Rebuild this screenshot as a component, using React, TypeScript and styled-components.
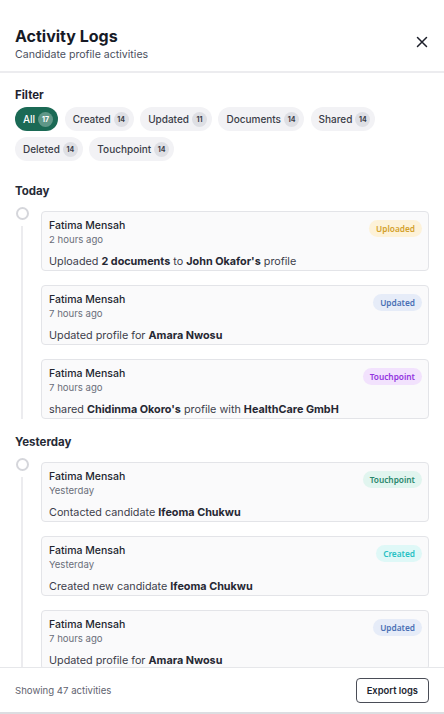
import React from "react";
import styled, { createGlobalStyle } from "styled-components";

const Global = createGlobalStyle`
  html, body { margin: 0; padding: 0; background: #ffffff; }
  * { box-sizing: border-box; }
  body { font-family: Inter, "Noto Sans", sans-serif; color: #1f2937; }
`;

const Panel = styled.div`
  width: 444px;
  height: 714px;
  display: flex;
  flex-direction: column;
  background: #fff;
  border-bottom: 2px solid #dcdde1;
  overflow: hidden;
`;

const Header = styled.header`
  display: flex;
  align-items: center;
  justify-content: space-between;
  height: 73px;
  padding: 16px 16px 0 15px;
  border-bottom: 2px solid #ececef;
  flex-shrink: 0;
`;

const TitleBlock = styled.div`
  display: flex;
  flex-direction: column;
  gap: 1px;
`;

const Title = styled.h1`
  margin: 0;
  font-size: 16px;
  line-height: 20px;
  font-weight: 700;
  color: #161a26;
`;

const Subtitle = styled.p`
  margin: 0;
  font-size: 10.6px;
  line-height: 15px;
  color: #4b5060;
`;

const CloseButton = styled.button`
  border: 0;
  background: none;
  padding: 0;
  width: 12px;
  height: 12px;
  margin-top: -4px;
  display: flex;
  align-items: center;
  justify-content: center;
  color: #1c1f2a;
  cursor: pointer;
`;

const Body = styled.div`
  flex: 1;
  overflow: hidden;
  padding: 15px 15px 0;
`;

const SectionLabel = styled.div`
  font-size: 11.5px;
  line-height: 15px;
  font-weight: 700;
  color: #1f2330;
  margin-bottom: 4px;
`;

const Chips = styled.div`
  display: flex;
  flex-wrap: wrap;
  gap: 6px 6.5px;
`;

const Chip = styled.button<{ $active?: boolean }>`
  display: inline-flex;
  align-items: center;
  gap: 3px;
  height: 24px;
  padding: 0 5px 0 8px;
  border: 0;
  border-radius: 12px;
  font-family: Inter, "Noto Sans", sans-serif;
  font-size: 10px;
  font-weight: 500;
  color: ${(p) => (p.$active ? "#ffffff" : "#3a3d48")};
  background: ${(p) => (p.$active ? "#1b6a55" : "#f2f2f5")};
`;

const Count = styled.span<{ $active?: boolean }>`
  display: inline-flex;
  align-items: center;
  justify-content: center;
  min-width: 15px;
  height: 15px;
  padding: 0 3px;
  border-radius: 8px;
  font-size: 7px;
  font-weight: 700;
  color: ${(p) => (p.$active ? "#ffffff" : "#3a3d48")};
  background: ${(p) => (p.$active ? "rgba(255,255,255,0.3)" : "#dedfe4")};
`;

const Group = styled.section`
  margin-top: 22px;
  & + & { margin-top: 15px; }
`;

const GroupTitle = styled.h2`
  margin: 0 0 8px;
  font-size: 11.5px;
  line-height: 16px;
  font-weight: 700;
  color: #262a36;
`;

const Timeline = styled.div`
  display: grid;
  grid-template-columns: 26px 1fr;
`;

const Rail = styled.div`
  display: flex;
  flex-direction: column;
  align-items: center;
  width: 14px;
`;

const Dot = styled.div`
  width: 13px;
  height: 13px;
  border-radius: 50%;
  border: 2.5px solid #d5d6db;
  background: #fff;
  flex-shrink: 0;
`;

const Line = styled.div`
  flex: 1;
  width: 2px;
  margin-top: 6px;
  background: #ececef;
`;

const Cards = styled.div`
  display: flex;
  flex-direction: column;
  gap: 14px;
  margin-top: 4px;
`;

const Card = styled.article`
  position: relative;
  height: 60px;
  padding: 7px 7px 0;
  border: 1px solid #e3e4e8;
  border-radius: 4px;
  background: #fafafb;
`;

const Name = styled.div`
  font-size: 10.5px;
  line-height: 14px;
  font-weight: 500;
  color: #22252f;
`;

const Time = styled.div`
  font-size: 9.6px;
  line-height: 14px;
  color: #6a6e7a;
`;

const Text = styled.p`
  margin: 8px 0 0;
  font-size: 10.8px;
  line-height: 14px;
  color: #3d404b;
  b { font-weight: 700; color: #262833; }
`;

const Badge = styled.span<{ $bg: string; $fg: string }>`
  position: absolute;
  top: 8px;
  right: 6px;
  height: 17px;
  padding: 0 7px;
  border-radius: 9px;
  display: inline-flex;
  align-items: center;
  font-family: "Noto Sans", Inter, sans-serif;
  font-size: 8.3px;
  font-weight: 600;
  background: ${(p) => p.$bg};
  color: ${(p) => p.$fg};
`;

const Footer = styled.footer`
  flex-shrink: 0;
  height: 45px;
  display: flex;
  align-items: center;
  justify-content: space-between;
  padding: 0 15px;
  border-top: 1px solid #e6e7ea;
`;

const FooterText = styled.span`
  font-size: 9.6px;
  color: #5f6370;
`;

const ExportButton = styled.button`
  height: 25px;
  padding: 0 10px;
  border: 1px solid #4a4d57;
  border-radius: 4px;
  background: #fff;
  font-family: Inter, "Noto Sans", sans-serif;
  font-size: 9.4px;
  font-weight: 600;
  color: #22252f;
`;

const badgeColors: Record<string, { bg: string; fg: string }> = {
  uploaded: { bg: "#fdf2d9", fg: "#d3a12c" },
  updated: { bg: "#e6ecf8", fg: "#4a70b5" },
  touchPurple: { bg: "#f2e2fd", fg: "#9234e0" },
  touchGreen: { bg: "#e1f5ef", fg: "#2a876c" },
  created: { bg: "#dff8f7", fg: "#27c1c4" },
};

type Item = { time: string; badge: string; kind: string; text: React.ReactNode };

const groups: { title: string; items: Item[] }[] = [
  {
    title: "Today",
    items: [
      { time: "2 hours ago", badge: "Uploaded", kind: "uploaded", text: <>Uploaded <b>2 documents</b> to <b>John Okafor's</b> profile</> },
      { time: "7 hours ago", badge: "Updated", kind: "updated", text: <>Updated profile for <b>Amara Nwosu</b></> },
      { time: "7 hours ago", badge: "Touchpoint", kind: "touchPurple", text: <>shared <b>Chidinma Okoro's</b> profile with <b>HealthCare GmbH</b></> },
    ],
  },
  {
    title: "Yesterday",
    items: [
      { time: "Yesterday", badge: "Touchpoint", kind: "touchGreen", text: <>Contacted candidate <b>Ifeoma Chukwu</b></> },
      { time: "Yesterday", badge: "Created", kind: "created", text: <>Created new candidate <b>Ifeoma Chukwu</b></> },
      { time: "7 hours ago", badge: "Updated", kind: "updated", text: <>Updated profile for <b>Amara Nwosu</b></> },
    ],
  },
];

const filters = [
  { label: "All", count: 17, active: true },
  { label: "Created", count: 14 },
  { label: "Updated", count: 11 },
  { label: "Documents", count: 14 },
  { label: "Shared", count: 14 },
  { label: "Deleted", count: 14 },
  { label: "Touchpoint", count: 14 },
];

export default function App() {
  return (
    <>
      <Global />
      <Panel>
        <Header>
          <TitleBlock>
            <Title>Activity Logs</Title>
            <Subtitle>Candidate profile activities</Subtitle>
          </TitleBlock>
          <CloseButton aria-label="Close">
            <svg width="12" height="12" viewBox="0 0 12 12" fill="none" stroke="currentColor" strokeWidth="1.5" strokeLinecap="round">
              <path d="M1.5 1.5L10.5 10.5M10.5 1.5L1.5 10.5" />
            </svg>
          </CloseButton>
        </Header>
        <Body>
          <SectionLabel>Filter</SectionLabel>
          <Chips>
            {filters.map((f) => (
              <Chip key={f.label} $active={f.active}>
                {f.label}
                <Count $active={f.active}>{f.count}</Count>
              </Chip>
            ))}
          </Chips>
          {groups.map((g) => (
            <Group key={g.title}>
              <GroupTitle>{g.title}</GroupTitle>
              <Timeline>
                <Rail>
                  <Dot />
                  <Line />
                </Rail>
                <Cards>
                  {g.items.map((it, i) => (
                    <Card key={i}>
                      <Name>Fatima Mensah</Name>
                      <Time>{it.time}</Time>
                      <Text>{it.text}</Text>
                      <Badge $bg={badgeColors[it.kind].bg} $fg={badgeColors[it.kind].fg}>{it.badge}</Badge>
                    </Card>
                  ))}
                </Cards>
              </Timeline>
            </Group>
          ))}
        </Body>
        <Footer>
          <FooterText>Showing 47 activities</FooterText>
          <ExportButton>Export logs</ExportButton>
        </Footer>
      </Panel>
    </>
  );
}
